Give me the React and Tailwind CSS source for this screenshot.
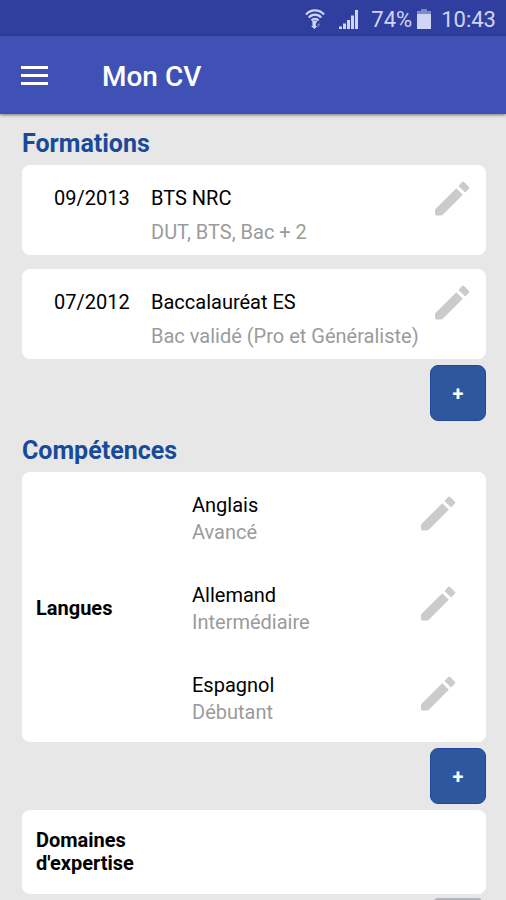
import React from "react";

const formations = [
  { date: "09/2013", title: "BTS NRC", level: "DUT, BTS, Bac + 2" },
  { date: "07/2012", title: "Baccalauréat ES", level: "Bac validé (Pro et Généraliste)" },
];

const languages = [
  { name: "Anglais", level: "Avancé" },
  { name: "Allemand", level: "Intermédiaire" },
  { name: "Espagnol", level: "Débutant" },
];

function WifiIcon() {
  return (
    <svg className="h-5 w-5" viewBox="0 0 20 20" fill="none" stroke="currentColor" strokeWidth="2.2" aria-hidden="true">
      <path d="M1 5.500C6 0 14 0 19 5.500" />
      <path d="M3.800 8.600c3.400-3.900 9-3.900 12.400 0" />
      <path d="M6.500 11.400c2-2.200 5-2.200 7 0" />
      <path d="M7.300 11.500h5.200l-1.700 3.200v2.300h1.400L9.400 20 6 17h1.500z" fill="currentColor" stroke="none" />
      <path d="M12.400 19v-3.500l1.800-1.500 1.300 2.500h-1.400z" fill="currentColor" stroke="none" opacity=".4" />
    </svg>
  );
}

function SignalIcon() {
  return (
    <svg className="h-5 w-5" viewBox="0 0 20 20" fill="currentColor" aria-hidden="true">
      <path d="M0 17.500h3V20H0zM4 14.500h3V20H4zM8 11h3v9H8zM12 6.500h3V20h-3zM16 1h3v19h-3z" />
    </svg>
  );
}

function BatteryIcon() {
  return (
    <svg className="h-5 w-[14px]" viewBox="0 0 14 20" fill="currentColor" aria-hidden="true">
      <path d="M4 0h6v2h4v4H0V2h4z" opacity=".5" />
      <path d="M0 5h14v15H0z" />
    </svg>
  );
}

function EditButton({ label }) {
  return (
    <button type="button" aria-label={label} className="shrink-0 self-start pt-4 text-[#cbcbcb]">
      <svg className="size-[35px]" viewBox="0 0 35 35" fill="currentColor" aria-hidden="true">
        <path d="M0 29.500Q0 28.300.9 27.400L21.300 7.200l6.500 6.500L8.300 33.300Q7.200 34.500 5.600 34.500H1.500Q0 34.500 0 33z" />
        <path d="M23.500 4.900l3.600-3.900q1-1 2 0l4.800 4.800q1 1 0 2l-3.800 3.700z" />
      </svg>
    </button>
  );
}

function AddRow({ label }) {
  return (
    <div className="flex justify-end py-[6px]">
      <button
        type="button"
        aria-label={label}
        className="size-14 rounded-lg border border-[#1d489c] bg-[#2f579f] pt-[2px] text-xl font-bold text-white"
      >
        +
      </button>
    </div>
  );
}

function SectionTitle({ children }) {
  return <h2 className="pb-[5px] text-[25px] font-bold leading-8 text-[#194a9a]">{children}</h2>;
}

export default function App() {
  return (
    <div className="flex h-screen flex-col overflow-hidden bg-[#e7e7e7] font-[Roboto,sans-serif] text-black">
      <div className="flex h-9 shrink-0 items-center justify-end bg-[#303f9f] pr-[10px] pt-[2px] text-[22px] text-[#d0d5f5]">
        <WifiIcon />
        <span className="ml-[14px]"><SignalIcon /></span>
        <span className="ml-3">74%</span>
        <span className="ml-[5px]"><BatteryIcon /></span>
        <span className="ml-[10px]">10:43</span>
      </div>

      <header className="z-10 flex h-[78px] shrink-0 items-center bg-[#3f51b5] px-[21px] text-white shadow-[0_1px_3px_rgba(0,0,0,0.5)]">
        <button type="button" aria-label="Menu" className="flex w-[27px] flex-col gap-[5px]">
          <span className="h-[3px] w-full bg-white" />
          <span className="h-[3px] w-full bg-white" />
          <span className="h-[3px] w-full bg-white" />
        </button>
        <h1 className="ml-[54px] pt-1 text-[28px] font-medium">Mon CV</h1>
      </header>

      <main className="min-h-0 flex-1 overflow-hidden pl-[22px] pr-5 pt-[14px] text-xl">
        <section>
          <SectionTitle>Formations</SectionTitle>
          <ul className="flex flex-col gap-[14px]">
            {formations.map((f) => (
              <li key={f.date} className="flex rounded-lg bg-white pl-8 pr-4">
                <span className="w-[97px] shrink-0 pt-4 leading-[34px]">{f.date}</span>
                <div className="min-w-0 flex-1 whitespace-nowrap pb-[6px] pt-4 leading-[34px]">
                  <p>{f.title}</p>
                  <p className="text-[#9b9b9b]">{f.level}</p>
                </div>
                <EditButton label={"Modifier " + f.title} />
              </li>
            ))}
          </ul>
          <AddRow label="Ajouter une formation" />
        </section>

        <section className="pt-2">
          <SectionTitle>Compétences</SectionTitle>
          <div className="flex items-center rounded-lg bg-white pl-[14px] pr-[30px]">
            <h3 className="w-[156px] shrink-0 pt-[2px] font-bold">Langues</h3>
            <ul className="flex-1">
              {languages.map((l) => (
                <li key={l.name} className="flex items-start">
                  <div className="flex-1 pb-4 pt-5 leading-[27px]">
                    <p>{l.name}</p>
                    <p className="text-[#9b9b9b]">{l.level}</p>
                  </div>
                  <span className="flex pt-2">
                    <EditButton label={"Modifier " + l.name} />
                  </span>
                </li>
              ))}
            </ul>
          </div>
          <AddRow label="Ajouter une langue" />
          <div className="rounded-lg bg-white px-[14px] py-[19px]">
            <h3 className="w-[120px] font-bold leading-[23px]">Domaines d'expertise</h3>
          </div>
          <div className="flex justify-end px-1 pt-1">
            <button type="button" aria-label="Ajouter un domaine" className="h-14 w-12 rounded-t-sm bg-[#b4b4bb]" />
          </div>
        </section>
      </main>
    </div>
  );
}
